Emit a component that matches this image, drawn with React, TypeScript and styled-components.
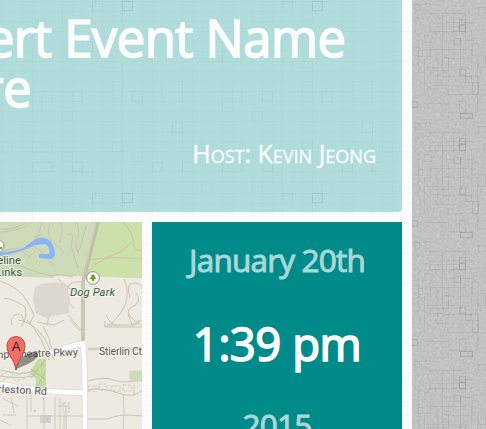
import React from "react";
import styled, { createGlobalStyle } from "styled-components";

const svgUrl = (w: number, h: number, body: string) =>
  `url("data:image/svg+xml,${encodeURIComponent(
    `<svg xmlns="http://www.w3.org/2000/svg" width="${w}" height="${h}">${body}</svg>`
  )}")`;

const outline = ([x, y, w, h, a]: number[], scale = 1) =>
  `<rect x="${x + 0.5}" y="${y + 0.5}" width="${w}" height="${h}" fill="none" stroke="#000" stroke-opacity="${a * scale}"/>`;

// Raised paper squares, [x, y, width, height, strength]
const paperSquares = [
  [122, 1, 10, 9, 0.14], [92, 1, 10, 9, 0.05], [112, 11, 10, 9, 0.02],
  [62, 11, 20, 10, 0.02], [12, 21, 20, 10, 0.015], [132, 31, 10, 10, 0.02],
  [72, 41, 20, 10, 0.04], [12, 51, 20, 10, 0.02], [102, 61, 20, 10, 0.02],
  [162, 81, 20, 20, 0.02], [112, 81, 10, 20, 0.02], [72, 91, 10, 10, 0.05],
  [132, 91, 10, 10, 0.04], [42, 91, 10, 10, 0.03], [32, 101, 10, 10, 0.03],
  [62, 111, 10, 9, 0.03], [172, 122, 10, 10, 0.05], [162, 132, 20, 10, 0.02],
  [112, 142, 10, 9, 0.05], [32, 142, 20, 10, 0.03], [2, 142, 10, 10, 0.02],
  [62, 152, 10, 9, 0.03], [132, 152, 10, 9, 0.03], [72, 162, 10, 9, 0.07],
  [32, 162, 20, 9, 0.05], [152, 162, 10, 9, 0.05], [182, 162, 8, 9, 0.04],
  [82, 172, 10, 10, 0.02], [12, 182, 10, 9, 0.03], [62, 182, 10, 9, 0.03],
  [132, 182, 10, 9, 0.03], [102, 172, 20, 10, 0.02],
];

const paperGrid = Array.from({ length: 19 }, (_, i) =>
  `<path d="M${i * 10 + 2.5} 0V192M0 ${i * 10 + 1.5}H190" stroke="#000" stroke-opacity="${i % 3 ? 0.009 : 0.016}"/>`
).join("");

const paper = svgUrl(190, 192, paperGrid + paperSquares.map((s) => outline(s, 0.55)).join(""));

const concreteSquares = [
  [47, 19, 6, 5, 0.14], [47, 25, 6, 6, 0.22], [17, 26, 30, 5, 0.08],
  [42, 38, 6, 6, 0.1], [12, 35, 7, 7, 0.05], [30, 57, 6, 13, 0.08],
  [18, 70, 13, 5, 0.09], [47, 69, 6, 6, 0.14], [53, 76, 6, 6, 0.1],
  [60, 82, 6, 12, 0.12], [0, 101, 5, 6, 0.15], [47, 101, 6, 12, 0.08],
  [48, 113, 12, 5, 0.2], [13, 3, 5, 14, 0.06], [60, 43, 6, 12, 0.06],
  [6, 50, 12, 6, 0.06], [66, 7, 7, 6, 0.07], [18, 82, 12, 6, 0.04],
  [66, 55, 7, 12, 0.06], [2, 4, 5, 6, 0.06], [30, 104, 6, 12, 0.04],
];
const concreteLines = [3, 6, 12, 18, 25, 30, 36, 41, 48, 53, 59, 65, 71]
  .map((x, i) =>
    `<path d="M${x + 0.5} ${(i * 29) % 65}v${35 + ((i * 13) % 25)}M${(i * 17) % 35} ${i * 9 + 4.5}h${25 + ((i * 11) % 20)}" stroke="#000" stroke-opacity="${0.03 + (i % 3) * 0.012}"/>`
  ).join("");
const concrete = svgUrl(
  76, 119,
  `<filter id="n" x="0" y="0" width="100%" height="100%" color-interpolation-filters="sRGB"><feTurbulence type="fractalNoise" baseFrequency=".4" numOctaves="2" seed="8" stitchTiles="stitch"/><feColorMatrix values="0.25 0.25 0 0 .5 0.25 0.25 0 0 .5 0.25 0.25 0 0 .5 0 0 0 0 1"/></filter>` +
    `<rect width="76" height="119" fill="#c3c3c3"/><rect width="76" height="119" filter="url(#n)" opacity=".3"/>` +
    concreteLines + concreteSquares.map((s) => outline(s, 0.65)).join("")
);

const GlobalStyle = createGlobalStyle`
  html, body { margin: 0; overflow: hidden; }
  body { background: #bdbdbd; font-family: "Open Sans", sans-serif; }
  * { box-sizing: border-box; }
`;

const Screen = styled.div`
  display: flex;
  width: 486px;
  height: 429px;
  overflow: hidden;
`;

const Page = styled.main`
  display: grid;
  grid-template-rows: 212px 207px;
  row-gap: 10px;
  flex: 0 0 412px;
  padding-right: 10px;
  background: #fcfcfc ${paper};
  overflow: hidden;
`;

const Concrete = styled.aside`
  flex: 1;
  background: #bdbdbd ${concrete};
`;

const Banner = styled.header`
  padding-top: 12px;
  background: #b0dcdb ${paper};
  border-radius: 0 0 4px;
  color: #fcfdfd;
  overflow: hidden;
`;

const EventName = styled.h1`
  width: 440px;
  margin: 0 0 0 -82px;
  font-size: 51px;
  font-weight: 400;
  line-height: 50px;
  letter-spacing: -0.65px;
  -webkit-text-stroke: 1.6px currentColor;
`;

const Host = styled.p`
  margin: 24px 26px 0 0;
  font-size: 25px;
  line-height: 34px;
  text-align: right;
  font-variant: small-caps;
  -webkit-text-stroke: 0.3px currentColor;
`;

const Details = styled.section`
  display: grid;
  grid-template-columns: 142px 250px;
  column-gap: 10px;
`;

const MapPanel = styled.div`
  overflow: hidden;
  svg { display: block; }
`;

const DatePanel = styled.div`
  display: flex;
  flex-direction: column;
  align-items: center;
  background: #008b8a;
  text-align: center;
  overflow: hidden;
`;

const DateText = styled.div<{ $gap: number }>`
  flex: none;
  margin-top: ${(p) => p.$gap}px;
  color: #a8d8d7;
  font-size: 31.5px;
  line-height: 44px;
  letter-spacing: -0.8px;
  -webkit-text-stroke: 1px currentColor;
`;

const Time = styled.div`
  flex: none;
  margin-top: 30px;
  margin-bottom: 1px;
  color: #fff;
  font-size: 45.5px;
  line-height: 62px;
  letter-spacing: -0.5px;
  -webkit-text-stroke: 1.6px currentColor;
`;

const MapLabel = styled.text<{ $park?: boolean }>`
  font: 400 ${(p) => (p.$park ? "11.3px" : "10.5px")} Roboto, sans-serif;
  fill: ${(p) => (p.$park ? "#315f3b" : "#555")};
  stroke: #f7f5ef;
  stroke-width: 2px;
  stroke-opacity: 0.75;
  paint-order: stroke;
`;

function EventMap() {
  return (
    <svg width="142" height="207" viewBox="0 0 142 207">
      <rect width="142" height="207" fill="#eeeae1" />
      <path d="M0 0H142V56L85 54H55L53 56 0 54Z" fill="#cedbb9" />
      <path d="M96 0H142V56L83 54Z" fill="#cce0a9" />
      <g fill="none" stroke="#c9c3ad" strokeWidth="1">
        <path d="M0 7Q14 8 27 0M0 10Q22 9 32 0M42 0L39 11 31 22 42 30 54 44M42 12Q33 15 40 21M50 0Q45 17 56 23T61 34M61 0Q64 14 59 21M67 13Q76 7 71 24L78 46M77 0Q81 14 75 21L78 31Q83 19 86 4M0 42Q13 40 26 46T54 54L57 52 73 55M0 29L18 26 29 35 36 29M123 0Q134 12 133 20T142 29M133 20Q121 31 107 36T86 54M142 37Q116 34 86 38" />
        <path d="M0 59Q20 66 27 79T34 93L30 101M4 76Q14 77 25 85 28 95 21 105M12 103Q9 97 15 93T24 99M49 94L47 104M68 93L82 109M83 60Q70 58 67 67T74 87M84 75Q67 66 58 57M124 57Q130 71 125 83T107 105M130 76Q125 60 135 61T142 72M136 71Q143 80 132 85T142 104M106 93Q110 102 119 105M128 92L132 103 142 98" />
        <path d="M18 98Q42 101 54 138M27 98Q43 115 49 138M37 100L54 103 64 98M43 104Q50 115 52 128M70 98L80 109M105 99V105H142M107 103H136L139 98M88 159Q104 154 113 158T142 158M86 168Q103 165 118 171T142 168M88 197H108Q119 191 142 194M0 148 20 152 36 149M0 154Q25 158 39 152" />
      </g>
      <path d="M88 127H142" stroke="#d6d1c4" strokeWidth="3" />
      <path d="M98 0Q90 30 83 60V120" fill="none" stroke="#bfbca7" strokeWidth="3.5" />
      <path d="M96 0Q88 33 83 60V115" fill="none" stroke="#d2cdbb" strokeWidth="1.3" />
      <path d="M0 30Q20 30 29 22T45 16Q51 17 54 26T51 37L39 36V32L49 32Q51 25 45 22L35 23Q20 31 0 34Z" fill="#8ab4f8" />
      <path d="M35 65Q45 59 65 61L70 75 69 91Q62 93 52 94L48 97 36 91 33 78Z" fill="#ddd8cf" />
      <path d="M38 137H46V171L35 169 36 157 29 151Z" fill="#c5dba3" />
      <path d="M31 147L46 158M35 169L45 150M31 156L45 138" stroke="#a7bb87" strokeWidth=".7" />
      <path d="M130 149H142V159H130Z" fill="#ccddb8" stroke="#d8d8cb" />
      <path d="M40 193H51V201H40Z" fill="#d6d1c8" />
      <g fill="none" stroke="#cbc6b8" strokeWidth=".9">
        <path d="M27 173V207M31 173V190M55 175V207M27 194H82M60 176V207M123 172Q125 190 123 207M57 184H68M66 184V207M64 192V207M44 178V207M2 176 18 184M11 176 14 191M3 193H16M0 198 12 204M134 162V174" />
        <path d="M88 164h8v5h-8zm11-2h8v6h-8zm12 2h9v5h-9zm12-1h8v6h-8zM1 153l8-4 6 5 9-4 9 5M3 158l8-4 5 5 11-3M63 181h6v9h-6z" strokeDasharray="3 1.5" />
      </g>
      <path d="M34 188h1.5v1.5H34zm9-12h1.5v1.5H43zm4 20h1.5v1.5H47z" fill="#a5bde4" />
      <path d="M-2 134L12 133Q36 135 55 129T82 122M83 120Q85 145 85 171V207M0 162Q40 170 85 171" fill="none" stroke="#d5d0c4" strokeWidth="5.8" />
      <path d="M-2 134L12 133Q36 135 55 129T82 122M83 119Q85 145 85 171V207M0 162Q40 170 85 171" fill="none" stroke="#fff" strokeWidth="4.8" />
      <circle cx="-2" cy="24" r="6" fill="#fff" stroke="#8a9c74" />
      <path d="M0 27h2v-2H0z" fill="#6aa719" />
      <MapLabel $park x="21" y="41.5" textAnchor="end">Shoreline</MapLabel>
      <MapLabel $park x="22" y="53.5" textAnchor="end">Golf Links</MapLabel>
      <circle cx="93" cy="56" r="6.3" fill="#fff" stroke="#8d987b" />
      <path d="M93 52l2.2 2-.8.3 2.1 2.7h-2.4v2h-2.2v-2h-2.4l2.1-2.7-.8-.3z" fill="#63a50d" />
      <MapLabel $park x="70" y="73.5" textLength="45">
        <tspan fontStyle="italic">Dog Park</tspan>
      </MapLabel>
      <MapLabel x="78" y="133.5" textAnchor="end" transform="rotate(-2 78 134)">Amphitheatre Pkwy</MapLabel>
      <MapLabel x="99" y="133" textLength="43">Stierlin Ct</MapLabel>
      <MapLabel x="47" y="173" textAnchor="end" transform="rotate(3 47 172)" letterSpacing=".2">Charleston Rd</MapLabel>
      <path d="M16 147Q18 135 28 132 38 127 38 134 35 140 16 147" fill="#111" opacity=".42" />
      <path d="M16 148C14 136 7 133 7 123.5A9 9 0 0 1 25 123.5C25 133 18 136 16 148Z" fill="#f86e65" stroke="#963832" strokeWidth=".8" />
      <text x="16" y="128.5" textAnchor="middle" fontFamily="Liberation Sans, sans-serif" fontSize="13" fill="#251816">A</text>
    </svg>
  );
}

export default function App() {
  return (
    <>
      <GlobalStyle />
      <Screen>
        <Page>
          <Banner>
            <EventName>Insert Event Name Here</EventName>
            <Host>Host: Kevin Jeong</Host>
          </Banner>
          <Details>
            <MapPanel><EventMap /></MapPanel>
            <DatePanel>
              <DateText $gap={16}>January 20th</DateText>
              <Time>1:39 pm</Time>
              <DateText $gap={28}>2015</DateText>
            </DatePanel>
          </Details>
        </Page>
        <Concrete />
      </Screen>
    </>
  );
}
